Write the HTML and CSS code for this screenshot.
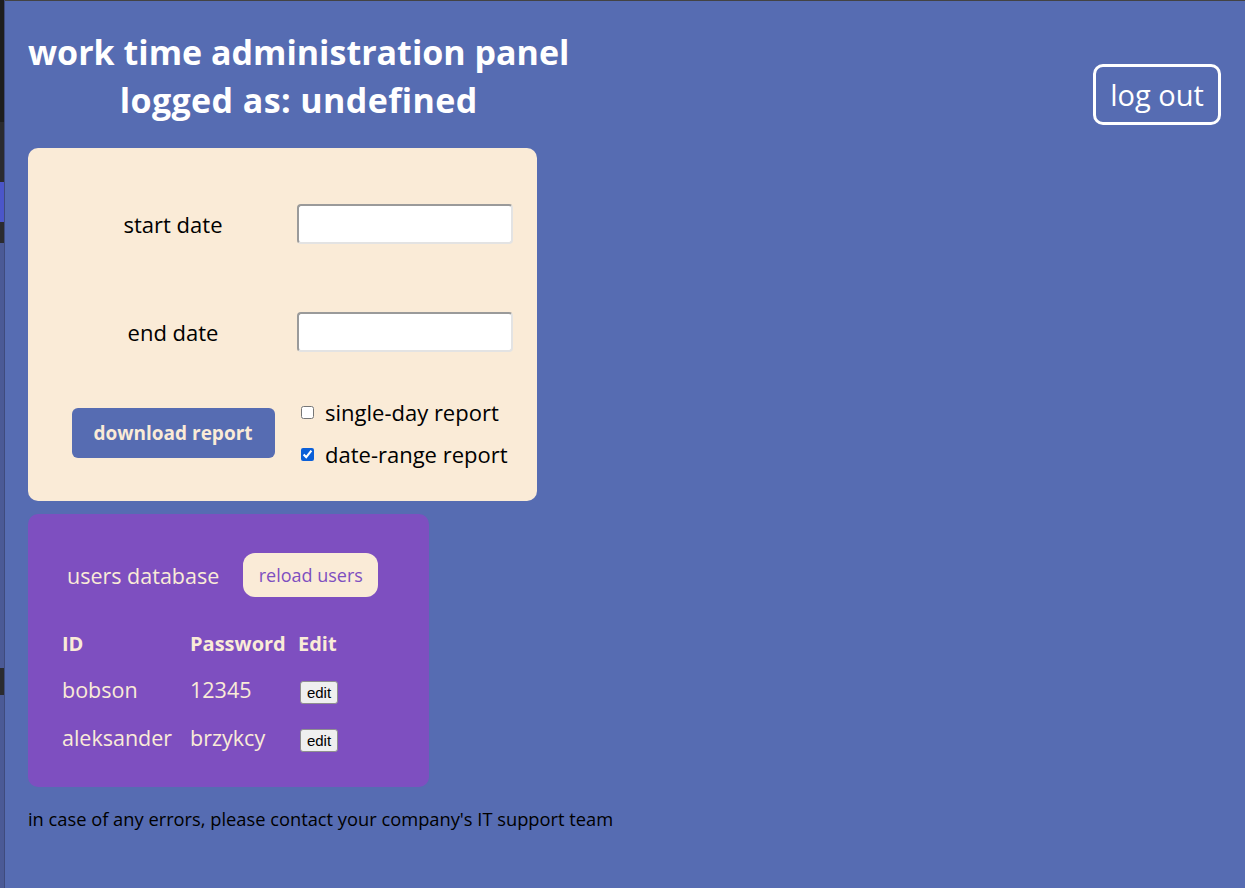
FILE: index.html
```html
<!DOCTYPE html>
<html lang="en">
<head>
<meta charset="utf-8">
<title>work time administration panel</title>
<link rel="stylesheet" href="styles.css">
</head>
<body>
<div class="page">
  <header class="top">
    <h1 class="title">work time administration panel<br><span class="logged">logged as: undefined</span></h1>
    <button class="logout" type="button">log out</button>
  </header>

  <section class="report">
    <label class="field-label" for="start">start date</label>
    <input class="date-input" id="start" type="text">
    <label class="field-label" for="end">end date</label>
    <input class="date-input" id="end" type="text">
    <div class="download-cell"><button class="download" type="button">download report</button></div>
    <div class="modes">
      <label class="mode"><input type="checkbox" class="check"> single-day report</label>
      <label class="mode"><input type="checkbox" class="check" checked> date-range report</label>
    </div>
  </section>

  <section class="users">
    <div class="users-head">
      <span class="users-title">users database</span>
      <button class="reload" type="button">reload users</button>
    </div>
    <table class="user-table">
      <thead>
        <tr><th class="col-id">ID</th><th class="col-pass">Password</th><th>Edit</th></tr>
      </thead>
      <tbody>
        <tr><td>bobson</td><td>12345</td><td><button class="edit" type="button">edit</button></td></tr>
        <tr><td>aleksander</td><td>brzykcy</td><td><button class="edit" type="button">edit</button></td></tr>
      </tbody>
    </table>
  </section>

  <p class="footer-note">in case of any errors, please contact your company's IT support team</p>
</div>
</body>
</html>
```

FILE: styles.css
```css
html {
  height: 100%;
  background:
    linear-gradient(#3f4b7d, #3f4b7d) 4px 0 / 1px 100% no-repeat,
    linear-gradient(to bottom,
      #1e1e1e 0 122px,
      #2b2b2f 122px 182px,
      #4b56c9 182px 222px,
      #2b2b2f 222px 243px,
      #4b5a96 243px 668px,
      #2b2b2f 668px 695px,
      #4b5a96 695px) 0 0 / 4px 100% no-repeat,
    linear-gradient(#434343, #434343) 0 0 / 100% 1px no-repeat,
    #566cb2;
}

body {
  margin: 0;
  padding: 0;
  min-height: 100%;
  font-family: "Open Sans", "Noto Sans", sans-serif;
  color: #000;
}

.page {
  padding: 0 24px 0 28px;
}

.top {
  display: flex;
  justify-content: space-between;
  align-items: flex-start;
}

.title {
  margin: 28px 0 0 0;
  font-size: 34px;
  line-height: 48px;
  font-weight: bold;
  color: #fff;
  text-align: center;
}

.logged {
  letter-spacing: 0.4px;
}

.logout {
  margin-top: 64px;
  width: 128px;
  height: 61px;
  background: transparent;
  border: 3px solid #fff;
  border-radius: 10px;
  color: #fff;
  font-family: inherit;
  font-size: 29px;
  padding: 0;
}

.report {
  margin-top: 23px;
  width: 509px;
  height: 353px;
  box-sizing: border-box;
  background: #faebd7;
  border-radius: 10px;
  padding: 36px 24px 35px 24px;
  display: grid;
  grid-template-columns: 242px 216px;
  grid-template-rows: 80px 80px 66px;
  column-gap: 3px;
  row-gap: 28px;
  align-items: center;
}

.field-label {
  text-align: center;
  font-size: 22px;
}

.date-input {
  width: 216px;
  height: 40px;
  box-sizing: border-box;
  background: #fff;
  border: 2px solid;
  border-color: #9a9a9a #e3e3e3 #e3e3e3 #9a9a9a;
  border-radius: 4px;
  outline: none;
}

.download-cell {
  display: flex;
  justify-content: center;
}

.download {
  width: 203px;
  height: 50px;
  border: none;
  border-radius: 6px;
  background: #566cb2;
  color: #faebd7;
  font-family: inherit;
  font-weight: bold;
  font-size: 19px;
}

.modes {
  display: flex;
  flex-direction: column;
  gap: 12px;
}

.mode {
  display: flex;
  align-items: center;
  height: 30px;
  font-size: 22px;
}

.check {
  width: 13px;
  height: 13px;
  margin: 0 11px 0 4px;
  accent-color: #0b5fd8;
}

.users {
  margin-top: 13px;
  width: 401px;
  height: 273px;
  box-sizing: border-box;
  background: #7e4fc0;
  border-radius: 10px;
  padding: 39px 0 0 34px;
  color: #faebd7;
}

.users-head {
  display: flex;
  align-items: center;
  gap: 24px;
  padding-left: 5px;
}

.users-title {
  font-size: 21.5px;
}

.reload {
  width: 135px;
  height: 44px;
  border: none;
  border-radius: 12px;
  background: #faebd7;
  color: #7e4fc0;
  font-family: inherit;
  font-size: 18px;
  padding: 0;
}

.user-table {
  margin-top: 24px;
  border-collapse: collapse;
  color: #faebd7;
}

.user-table th,
.user-table td {
  padding: 0;
  text-align: left;
  vertical-align: middle;
}

.user-table th {
  height: 44px;
  font-size: 20px;
}

.user-table td {
  height: 48px;
  font-size: 21.5px;
}

.col-id {
  width: 128px;
}

.col-pass {
  width: 108px;
}

.edit {
  margin-left: 2px;
  width: 38px;
  height: 23px;
  padding: 0;
  font-family: "Liberation Sans", Arial, sans-serif;
  font-size: 15px;
  line-height: 21px;
  background: #efefef;
  border: 1px solid #8f8f8f;
  border-radius: 3px;
  color: #000;
}

.footer-note {
  margin: 19px 0 0 0;
  font-size: 18.3px;
}
```
